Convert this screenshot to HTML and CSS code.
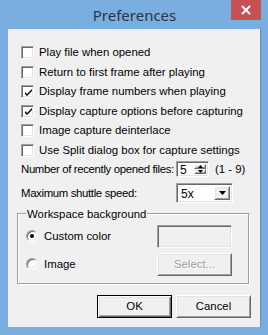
FILE: index.html
```html
<!DOCTYPE html>
<html lang="en">
<head>
  <meta charset="UTF-8" />
  <title>Preferences</title>
  <link rel="stylesheet" href="styles.css">
</head>
<body>
  <div class="window">
    <div class="titlebar">
      <span class="title">Preferences</span>
      <span class="close">
        <svg width="10" height="10" viewBox="0 0 10 10">
          <path d="M1 1 L9 9 M9 1 L1 9" stroke="#fff" stroke-width="2" />
        </svg>
      </span>
    </div>

    <div class="client">
      <div class="checks">
        <div class="check"><span class="box"></span>Play file when opened</div>
        <div class="check"><span class="box"></span>Return to first frame after playing</div>
        <div class="check"><span class="box"><svg width="9" height="9" viewBox="0 0 9 9"><path d="M1 4 L3 6 L8 1 L8 3 L3 8 L1 6 Z" fill="#000" /></svg></span>Display frame numbers when playing</div>
        <div class="check"><span class="box"><svg width="9" height="9" viewBox="0 0 9 9"><path d="M1 4 L3 6 L8 1 L8 3 L3 8 L1 6 Z" fill="#000" /></svg></span>Display capture options before capturing</div>
        <div class="check"><span class="box"></span>Image capture deinterlace</div>
        <div class="check"><span class="box"></span>Use Split dialog box for capture settings</div>
      </div>

      <div class="field-row spin-row">
        <span class="field-label">Number of recently opened files:</span>
        <span class="spin sunken">
          <span class="spin-value">5</span>
          <span class="spin-btns">
            <span class="spin-btn raised"><svg width="5" height="3" viewBox="0 0 5 3"><path d="M2.5 0 L5 3 L0 3 Z" fill="#000" /></svg></span>
            <span class="spin-btn raised"><svg width="5" height="3" viewBox="0 0 5 3"><path d="M0 0 L5 0 L2.5 3 Z" fill="#000" /></svg></span>
          </span>
        </span>
        <span class="range">(1 - 9)</span>
      </div>

      <div class="field-row combo-row">
        <span class="field-label">Maximum shuttle speed:</span>
        <span class="combo sunken">
          <span class="combo-value">5x</span>
          <span class="combo-btn raised"><svg width="7" height="4" viewBox="0 0 7 4"><path d="M0 0 L7 0 L3.5 4 Z" fill="#000" /></svg></span>
        </span>
      </div>

      <fieldset class="group">
        <legend>Workspace background</legend>
        <div class="radio-row">
          <span class="radio-label"><span class="radio on"></span>Custom color</span>
          <span class="swatch sunken"></span>
        </div>
        <div class="radio-row">
          <span class="radio-label"><span class="radio"></span>Image</span>
          <span class="btn raised disabled">Select...</span>
        </div>
      </fieldset>

      <div class="buttons">
        <span class="btn default">OK</span>
        <span class="btn raised">Cancel</span>
      </div>
    </div>
  </div>
</body>
</html>
```

FILE: styles.css
```css
body {
  margin: 0;
  font-family: "Liberation Sans", Arial, sans-serif;
  font-size: 11.4px;
  color: #000;
}

.window {
  width: 268px;
  height: 335px;
  background: #7aaee0;
  box-sizing: border-box;
  padding: 0 7px 8px 8px;
  display: flex;
  flex-direction: column;
}

.titlebar {
  height: 29px;
  display: grid;
  grid-template-columns: 1fr auto 1fr;
  align-items: start;
}

.title {
  grid-column: 2;
  font-family: "Noto Sans", sans-serif;
  font-size: 15px;
  color: #2b3440;
  line-height: 30px;
}

.close {
  grid-column: 3;
  justify-self: end;
  width: 30px;
  height: 20px;
  background: #c75050;
  display: flex;
  align-items: center;
  justify-content: center;
}

.client {
  flex: 1;
  background: #f0f0f0;
  border-right: 1px solid #5f90c4;
  padding-top: 17px;
}

/* checkboxes */
.checks {
  display: flex;
  flex-direction: column;
  gap: 6.6px;
  padding-left: 13px;
}

.check {
  height: 13px;
  display: flex;
  align-items: center;
  line-height: 13px;
  white-space: nowrap;
}

.box {
  width: 13px;
  height: 13px;
  flex: none;
  box-sizing: border-box;
  background: #fff;
  border: 1px solid;
  border-color: #a0a0a0 #fff #fff #a0a0a0;
  box-shadow: inset 1px 1px 0 #696969, inset -1px -1px 0 #e3e3e3;
  margin-right: 5px;
  display: flex;
  align-items: center;
  justify-content: center;
  padding: 1px 0 0 1px;
}

.sunken {
  border: 1px solid;
  border-color: #a0a0a0 #fff #fff #a0a0a0;
  box-shadow: inset 1px 1px 0 #696969, inset -1px -1px 0 #e3e3e3;
  box-sizing: border-box;
}

.raised {
  border: 1px solid;
  border-color: #fff #696969 #696969 #fff;
  box-shadow: inset 1px 1px 0 #e3e3e3, inset -1px -1px 0 #a0a0a0;
  box-sizing: border-box;
  background: #f0f0f0;
}

/* spinner + combo rows */
.field-row {
  display: flex;
  align-items: center;
  padding-left: 13px;
  white-space: nowrap;
}

.field-label {
  width: 155px;
  flex: none;
  letter-spacing: -0.35px;
}

.spin-row {
  margin-top: 4px;
  height: 16px;
}

.spin {
  width: 33px;
  height: 16px;
  flex: none;
  background: #fff;
  display: flex;
  padding: 2px 2px 2px 3px;
}

.spin-value {
  flex: 1;
  font-size: 12px;
  line-height: 12px;
}

.spin-btns {
  width: 12px;
  display: flex;
  flex-direction: column;
}

.spin-btn {
  flex: 1;
  display: flex;
  align-items: center;
  justify-content: center;
}

.range {
  margin-left: 6px;
}

.combo-row {
  margin-top: 6px;
  height: 20px;
}

.combo {
  width: 57px;
  height: 20px;
  flex: none;
  background: #fff;
  display: flex;
  padding: 2px;
}

.combo-value {
  flex: 1;
  font-size: 12px;
  line-height: 16px;
  padding-left: 2px;
}

.combo-btn {
  width: 16px;
  display: flex;
  align-items: center;
  justify-content: center;
}

/* group box */
.group {
  margin: 5px 10px 0 9px;
  padding: 5px 17px 0 8px;
  height: 77px;
  box-sizing: border-box;
  border: 1px solid;
  border-color: #a0a0a0 #fff #fff #a0a0a0;
  box-shadow: inset -1px -1px 0 #a0a0a0, inset 1px 1px 0 #fff;
  min-width: 0;
  display: flex;
  flex-direction: column;
  gap: 5px;
}

.group legend {
  padding: 0 1px;
  margin-left: 0;
  line-height: 12px;
}

.radio-row {
  display: flex;
  align-items: center;
  justify-content: space-between;
  height: 23px;
}

.radio-label {
  display: flex;
  align-items: center;
}

.radio {
  width: 12px;
  height: 12px;
  box-sizing: border-box;
  border-radius: 50%;
  background: #fff;
  border: 1px solid;
  border-color: #a0a0a0 #fff #fff #a0a0a0;
  box-shadow: inset 1px 1px 0 #696969, inset -1px -1px 0 #e3e3e3;
  margin-right: 6px;
  display: flex;
  align-items: center;
  justify-content: center;
}

.radio.on::after {
  content: "";
  width: 4px;
  height: 4px;
  border-radius: 50%;
  background: #000;
}

.swatch {
  width: 75px;
  height: 23px;
}

.btn {
  width: 75px;
  height: 23px;
  display: flex;
  align-items: center;
  justify-content: center;
}

.btn.disabled {
  color: #a0a0a0;
  text-shadow: 1px 1px 0 #fff;
}

.buttons {
  display: flex;
  justify-content: flex-end;
  gap: 4px;
  margin-top: 10px;
  padding-right: 9px;
}

.btn.default {
  box-sizing: border-box;
  border: 1px solid #000;
  background: #f0f0f0;
  box-shadow: inset 1px 1px 0 #fff, inset -1px -1px 0 #696969, inset 2px 2px 0 #e3e3e3, inset -2px -2px 0 #a0a0a0;
}
```
